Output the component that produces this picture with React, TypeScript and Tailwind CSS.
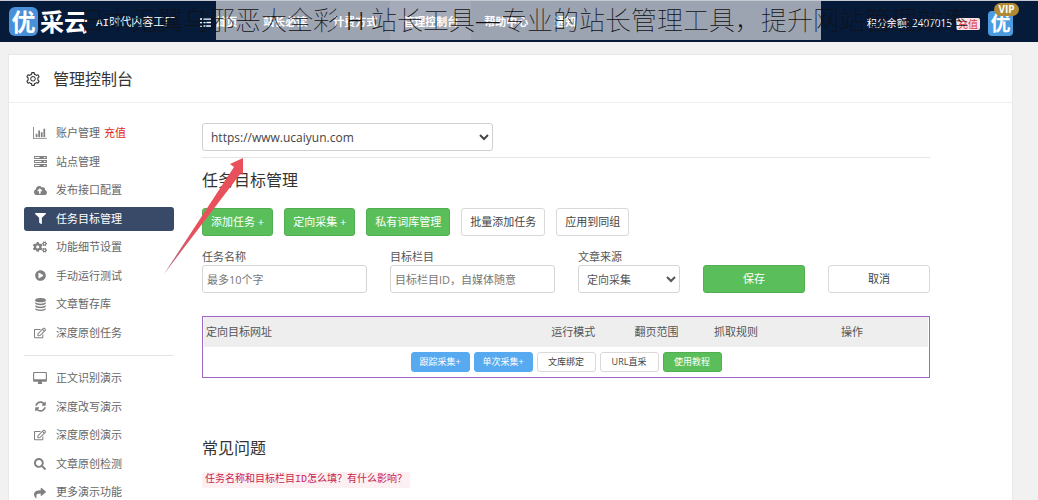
import { useState } from "react";
import type { ReactNode } from "react";
import { AiOutlineSetting } from "react-icons/ai";
import { FaCloudUploadAlt, FaFilter, FaCogs, FaPlayCircle, FaRegEdit, FaSyncAlt, FaSearch, FaShare, FaListUl } from "react-icons/fa";

interface MenuItem {
    label: string;
    icon: ReactNode;
    badge?: string;
}

const ChartIcon = () => (
    <svg viewBox="0 0 16 14" className="w-[14px] h-3" fill="currentColor">
        <path d="M0 0h1v13h15v1H0zM3 8h2v4H3zM6 4h2v8H6zM9 6h2v6H9zM12 2h2v10h-2z" />
    </svg>
)

const ServerIcon = () => (
    <svg viewBox="0 0 14 12" className="w-[13px] h-[11px]" fill="currentColor">
        <path fillRule="evenodd" d="M0 0h14v3.4H0zM1 1.2v1h5v-1zM10.5 1.2v1h2v-1zM0 4.3h14v3.4H0zM1 5.5v1h7v-1zM10.5 5.5v1h2v-1zM0 8.6h14V12H0zM1 9.8v1h5v-1zM10.5 9.8v1h2v-1z" />
    </svg>
)

const DatabaseIcon = () => (
    <svg viewBox="0 0 12 14" className="w-[11px] h-[13px]" fill="currentColor">
        <ellipse cx="6" cy="2.3" rx="5.8" ry="2.3" />
        <path d="M.2 4.600c2.500 2 9.100 2 11.600 0v1c0 2.800-11.600 2.800-11.600 0zM.2 7.900c2.500 2 9.100 2 11.600 0v1c0 2.800-11.600 2.800-11.600 0zM.2 11.100c2.500 2 9.100 2 11.600 0v.8c0 2.800-11.600 2.800-11.600 0z" />
    </svg>
)

const DesktopIcon = () => (
    <svg viewBox="0 0 15 13" className="w-[14px] h-3" fill="currentColor">
        <path fillRule="evenodd" d="M1 0h13q1 0 1 1v8.500q0 1-1 1H9.300l.5 1.700v.8H5.200v-.8l.5-1.700H1q-1 0-1-1V1q0-1 1-1zm.2 1.100v6.700h12.600V1.100z" />
    </svg>
)

const siteMenu: MenuItem[] = [
    { label: "账户管理", icon: <ChartIcon />, badge: "充值" },
    { label: "站点管理", icon: <ServerIcon /> },
    { label: "发布接口配置", icon: <FaCloudUploadAlt size={13} /> },
    { label: "任务目标管理", icon: <FaFilter size={11} /> },
    { label: "功能细节设置", icon: <FaCogs size={14} /> },
    { label: "手动运行测试", icon: <FaPlayCircle size={11} /> },
    { label: "文章暂存库", icon: <DatabaseIcon /> },
    { label: "深度原创任务", icon: <FaRegEdit size={12} /> },
]

const demoMenu: MenuItem[] = [
    { label: "正文识别演示", icon: <DesktopIcon /> },
    { label: "深度改写演示", icon: <FaSyncAlt size={11} /> },
    { label: "深度原创演示", icon: <FaRegEdit size={12} /> },
    { label: "文章原创检测", icon: <FaSearch size={12} /> },
    { label: "更多演示功能", icon: <FaShare size={12} /> },
]

const navItems = ["首页", "站长必读", "计费方式", "管理控制台", "帮助中心", "通知"]

const green = "bg-[#5abf5a] border-[#52ae52] text-white"
const white = "bg-white border-[#d9d9d9] text-[#444]"
const blue = "bg-[#58aaf0] border-[#58aaf0] text-white"

const taskButtons = [
    { label: "添加任务 +", style: green },
    { label: "定向采集 +", style: green },
    { label: "私有词库管理", style: green },
    { label: "批量添加任务", style: white },
    { label: "应用到同组", style: white },
]

const rowButtons = [
    { label: "跟踪采集+", style: blue },
    { label: "单次采集+", style: blue },
    { label: "文库绑定", style: white },
    { label: "URL直采", style: white },
    { label: "使用教程", style: green },
]

const Header = () => (
    <header className="relative h-[42px] border-t border-[#c5cad2] bg-[#061a3a] text-white flex items-center pl-[9px] pr-[25px]">
        <a href="#" className="flex items-center shrink-0">
            <span className="w-[29px] h-[29px] rounded-md bg-[#4a90d9] flex items-center justify-center text-2xl font-bold leading-none">优</span>
            <span className="pl-[2px] text-2xl font-bold leading-none">采云</span>
            <span className="pl-2 pt-1 text-[11px] font-['Liberation_Mono','Noto_Sans_CJK_SC',monospace]">AI时代内容工厂</span>
        </a>

        {/* light band behind the page title */}
        <div className="absolute left-[216px] right-[217px] top-0 h-[39px] bg-[#9ca3b1]"></div>

        <nav className="relative flex self-stretch ml-3 text-[11px] font-bold">
            {navItems.map((item) => (
                <a
                href="#"
                key={item}
                className={`flex items-center gap-1 px-[13px] pt-1 h-[39px] whitespace-nowrap ${item === "管理控制台" ? "bg-[#a5abb8]" : ""}`}>
                    {item === "首页" && <FaListUl size={11} />}
                    {item}
                </a>
            ))}
        </nav>

        <div className="ml-auto flex items-center pt-1 text-[10px]">
            <span className="whitespace-nowrap">积分余额: 2407015</span>
            <a href="#" className="ml-1 px-[2px] h-3 leading-3 rounded-xs bg-[#fbe3e6] text-[#d9363e]">充值</a>
            <div className="relative ml-2 w-[25px] h-[25px] rounded bg-[#4a9be0] flex items-center justify-center text-xl font-bold leading-none">
                优
                <span className="absolute -top-2 left-[6px] w-[25px] text-center h-[13px] leading-[13px] rounded-full bg-[#b08a35] text-[10px]">VIP</span>
            </div>
        </div>

        <h1 className="absolute inset-x-0 top-0 h-[39px] pl-[10px] flex items-center justify-center text-[26px] font-thin text-[#111] whitespace-nowrap pointer-events-none">
            日本无翼乌邪恶大全彩 H 站长工具—专业的站长管理工具，提升网站管理效率
        </h1>
    </header>
)

interface MenuProps {
    items: MenuItem[];
    active: string;
    setActive: (label: string) => void;
    className: string;
}

const Menu = ({ items, active, setActive, className }: MenuProps) => (
    <ul className={`grid auto-rows-fr items-center ${className}`}>
        {items.map((item) => (
            <li key={item.label}>
                <button
                onClick={() => setActive(item.label)}
                className={`w-full h-6 flex items-center rounded-[3px] pl-2 text-[11px] ${active === item.label ? "bg-[#384a68] text-white" : "text-[#666]"}`}>
                    <span className={`w-4 mr-2 flex justify-center ${active === item.label ? "" : "text-[#808080]"}`}>{item.icon}</span>
                    {item.label}
                    {item.badge && <span className="ml-1 text-[#e02a20]">{item.badge}</span>}
                </button>
            </li>
        ))}
    </ul>
)

const Arrow = () => (
    <svg viewBox="0 0 82 118" className="absolute left-[163px] top-[157px] w-[82px] h-[118px] pointer-events-none">
        <defs>
            <linearGradient id="arrow" x1="1" y1="0" x2="0" y2="1">
                <stop offset="0.6" stopColor="#e8505b" />
                <stop offset="1" stopColor="#b06a80" />
            </linearGradient>
        </defs>
        <path d="M80 1L67 7L71 10L1 117L78 16L80 18Z" fill="url(#arrow)" />
    </svg>
)

const TaskForm = () => (
    <form onSubmit={(e) => e.preventDefault()} className="mt-3 grid grid-cols-[165fr_165fr_102fr_102fr_102fr] gap-x-[23px] items-end text-[11px] text-[#555]">
        <div>
            <label htmlFor="name" className="block h-[17px] leading-[17px]">任务名称</label>
            <input id="name" placeholder="最多10个字" className="w-full h-7 px-1 border border-[#d5d5d5] rounded-[3px] placeholder:text-[#777]" />
        </div>
        <div>
            <label htmlFor="column" className="block h-[17px] leading-[17px]">目标栏目</label>
            <input id="column" placeholder="目标栏目ID，自媒体随意" className="w-full h-7 px-1 border border-[#d5d5d5] rounded-[3px] placeholder:text-[#777]" />
        </div>
        <div>
            <label htmlFor="source" className="block h-[17px] leading-[17px]">文章来源</label>
            <select id="source" className="w-full h-7 px-1 border border-[#d5d5d5] rounded-[3px] bg-white">
                <option>定向采集</option>
            </select>
        </div>
        <button type="submit" className={`h-7 border rounded-[3px] ${green}`}>保存</button>
        <button type="button" className={`h-7 border rounded-[3px] ${white}`}>取消</button>
    </form>
)

const TargetTable = () => (
    <div className="mt-[23px] border border-[#a066c8] px-px">
        <table className="w-full table-fixed text-[11px] text-[#555]">
            <thead>
                <tr className="bg-[#eee] h-[30px]">
                    <th className="w-[45%] pl-[2px] text-left font-normal">定向目标网址</th>
                    <th className="w-[12%] font-normal">运行模式</th>
                    <th className="w-[11%] font-normal">翻页范围</th>
                    <th className="w-[11%] font-normal">抓取规则</th>
                    <th className="font-normal">操作</th>
                </tr>
            </thead>
            <tbody>
                <tr>
                    <td colSpan={5} className="h-[30px]">
                        <div className="flex justify-center gap-1">
                            {rowButtons.map((btn) => (
                                <button key={btn.label} className={`w-[59px] h-5 border rounded-[3px] text-[9px] whitespace-nowrap ${btn.style}`}>{btn.label}</button>
                            ))}
                        </div>
                    </td>
                </tr>
            </tbody>
        </table>
    </div>
)

const App = () => {
    const [active, setActive] = useState<string>("任务目标管理");

    return (
        <div className="relative h-screen overflow-hidden bg-[#f1f1f1] font-['Open_Sans','Noto_Sans_CJK_SC',sans-serif]">
            <Header />

            <div className="mt-3 ml-2 mr-[25px] min-h-full bg-white border border-[#e8e8e8]">
                <div className="h-12 flex items-center gap-3 pl-4 border-b border-[#eee] text-[#333]">
                    <AiOutlineSetting size={16} />
                    <h2 className="text-base">管理控制台</h2>
                </div>

                <div className="flex pt-4 pl-[15px] pr-[82px]">
                    {/* side menu */}
                    <aside className="w-[150px] shrink-0">
                        <Menu items={siteMenu} active={active} setActive={setActive} className="h-[228px]" />
                        <hr className="my-2 border-[#e5e5e5]" />
                        <Menu items={demoMenu} active={active} setActive={setActive} className="h-[143px]" />
                    </aside>

                    <main className="flex-1 ml-7 pt-1">
                        <select aria-label="站点" className="block w-2/5 h-7 px-1 border border-[#d0d0d0] rounded-[3px] bg-white text-xs text-[#444]">
                            <option>https://www.ucaiyun.com</option>
                        </select>
                        <hr className="mt-[6px] border-[#e5e5e5]" />
                        <h3 className="mt-[10px] text-base text-[#333]">任务目标管理</h3>

                        <div className="mt-4 flex gap-[11px]">
                            {taskButtons.map((btn) => (
                                <button key={btn.label} className={`h-7 px-2 border rounded-[3px] text-[11px] whitespace-nowrap ${btn.style}`}>{btn.label}</button>
                            ))}
                        </div>

                        <TaskForm />
                        <TargetTable />

                        <h3 className="mt-[58px] text-base text-[#333]">常见问题</h3>
                        <code className="inline-block mt-3 px-[3px] rounded-xs bg-[#fdf0f3] text-[10px] leading-4 text-[#c7254e] font-['Liberation_Mono','Noto_Sans_CJK_SC',monospace]">
                            任务名称和目标栏目ID怎么填？有什么影响？
                        </code>
                    </main>
                </div>
            </div>

            <Arrow />
        </div>
    )
}

export default App;
